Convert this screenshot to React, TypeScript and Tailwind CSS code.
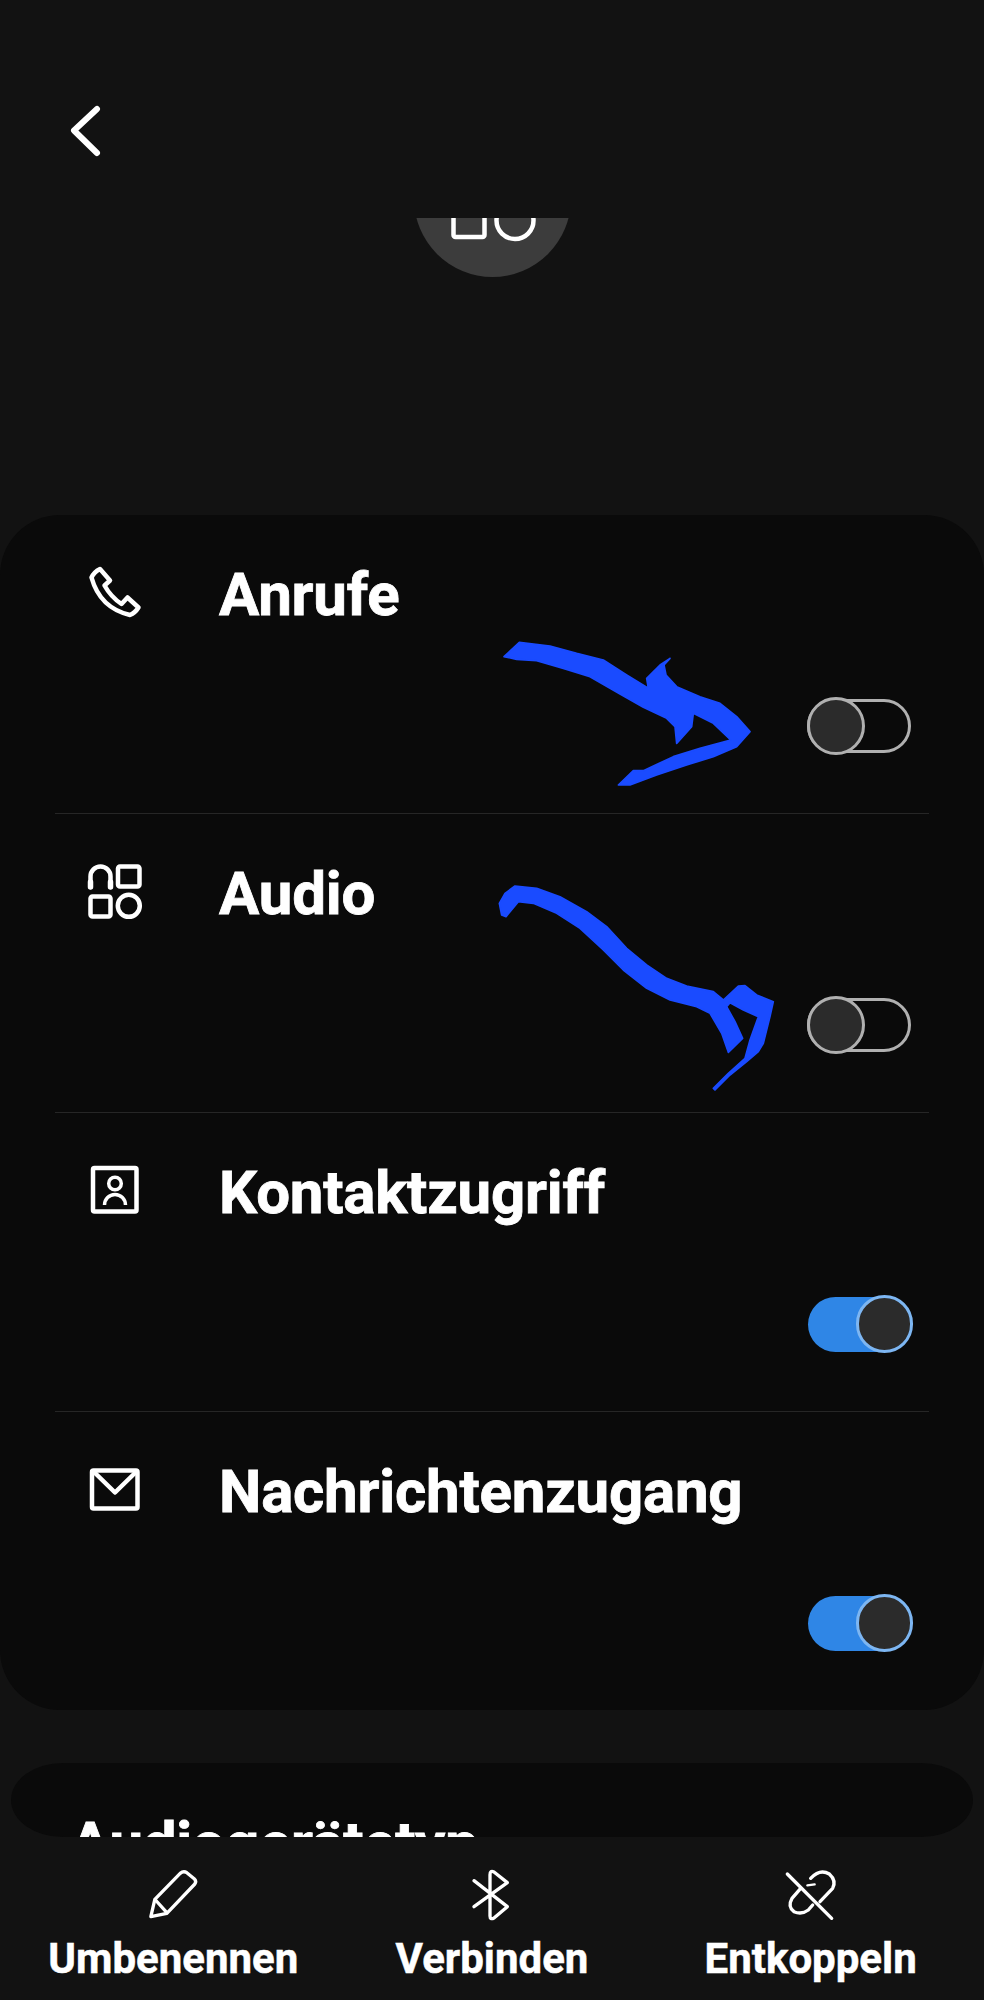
import type { ReactNode } from "react";

const font = { fontFamily: "Roboto, sans-serif" };

function Glyph({ children }: { children: ReactNode }) {
  return (
    <svg
      width="60"
      height="60"
      viewBox="0 0 60 60"
      fill="none"
      stroke="white"
      strokeWidth="4.5"
      strokeLinecap="round"
      strokeLinejoin="round"
      className="mt-[2px] shrink-0"
    >
      {children}
    </svg>
  );
}

function PhoneIcon() {
  return (
    <Glyph>
      <path d="M15 7 L25 18.5 L19.5 23.5 Q26 35 36.5 42 L42.5 35.5 L53.5 45.5 Q50 51 45 53 Q15 46 6.5 15.5 Q9 10 15 7 Z" />
    </Glyph>
  );
}

function AudioIcon() {
  return (
    <Glyph>
      <path d="M5.5 26 V15.5 a10 10 0 0 1 20 0 V26" />
      <path d="M5.5 21 V26 M25.5 21 V26" strokeWidth="5.5" />
      <rect x="33" y="5.5" width="21.5" height="20" rx="2" />
      <rect x="5.5" y="35.5" width="20" height="20" rx="2" />
      <circle cx="43.8" cy="44.8" r="11" />
    </Glyph>
  );
}

function ContactIcon() {
  return (
    <Glyph>
      <rect x="8" y="8" width="43.5" height="43.5" rx="1.5" />
      <circle cx="30" cy="23.5" r="6.3" strokeWidth="3.5" />
      <path d="M19.5 45 a10.5 10.5 0 0 1 21 0" strokeWidth="3.5" strokeLinecap="butt" />
    </Glyph>
  );
}

function MailIcon() {
  return (
    <Glyph>
      <rect x="7" y="11.5" width="45.5" height="38" rx="1.5" />
      <path d="M8.5 12.5 L30 33.5 L51.5 12.5" />
    </Glyph>
  );
}

function Toggle({ on }: { on: boolean }) {
  if (on) {
    return (
      <div className="flex h-[55px] w-[103px] items-center justify-end rounded-full bg-[#2f86e6]">
        <div className="-mr-[2px] h-[58px] w-[57px] shrink-0 rounded-full border-[3px] border-[#7db6f2] bg-[#2b2b2b]" />
      </div>
    );
  }
  return (
    <div className="flex h-[54px] w-[104px] items-center rounded-full border-[3px] border-[#b0b0b0]">
      <div className="-ml-[3px] h-[58px] w-[58px] shrink-0 rounded-full border-[3px] border-[#b0b0b0] bg-[#2b2b2b]" />
    </div>
  );
}

function SettingRow({ icon, title, on }: { icon: ReactNode; title: string; on: boolean }) {
  return (
    <div className="flex h-[298px] flex-col pt-[45px]">
      <div className="flex h-[70px] items-start pl-[85px]">
        {icon}
        <span className="ml-[74px] text-[60px] leading-[70px] font-bold tracking-[-0.2px] text-white [-webkit-text-stroke:0.8px_white]">
          {title}
        </span>
      </div>
      <div className="mt-[67px] flex h-[58px] items-center justify-end pr-[73px]">
        <Toggle on={on} />
      </div>
    </div>
  );
}

function Divider() {
  return <div className="mx-[55px] h-px bg-[#262626]" />;
}

function BottomAction({ label, viewBox, children }: { label: string; viewBox: string; children: ReactNode }) {
  return (
    <div className="flex flex-col items-center">
      <svg
        width="90"
        height="70"
        viewBox={viewBox}
        fill="none"
        stroke="white"
        strokeWidth="10"
        strokeLinecap="round"
        strokeLinejoin="round"
      >
        {children}
      </svg>
      <span className="mt-[4px] text-[42px] leading-[50px] font-bold whitespace-nowrap text-white [-webkit-text-stroke:0.5px_white]">
        {label}
      </span>
    </div>
  );
}

// hand drawn arrows on top of the screenshot
function Scribbles() {
  return (
    <svg
      width="460"
      height="480"
      viewBox="0 0 1380 1440"
      fill="#1a4bff"
      stroke="#1a4bff"
      strokeWidth="5"
      strokeLinejoin="round"
      className="absolute top-[620px] left-[480px]"
    >
      <path d="M72 110 L118 67 L210 78 L290 100 L370 120 L440 165 L505 205 L500 175 L540 135 L570 115 L552 135 L558 165 L590 200 L660 230 L720 250 L770 290 L810 335 L770 380 L700 410 L620 435 L530 465 L450 495 L415 495 L460 452 L490 452 L580 410 L660 385 L752 360 L700 310 L640 280 L635 320 L590 370 L585 320 L560 295 L490 262 L420 222 L330 170 L250 145 L170 122 L110 118 Z" />
      <path d="M58 850 L75 820 L105 798 L170 805 L240 830 L320 875 L380 920 L440 985 L500 1035 L560 1075 L620 1098 L700 1115 L730 1140 L775 1098 L795 1097 L830 1125 L880 1145 L870 1190 L850 1270 L835 1295 L800 1325 L750 1365 L705 1410 L700 1405 L745 1360 L795 1315 L810 1260 L835 1190 L790 1170 L750 1148 L740 1160 L765 1205 L788 1255 L745 1297 L725 1240 L690 1180 L650 1160 L570 1140 L500 1105 L430 1050 L370 990 L300 925 L230 880 L160 850 L115 845 L78 890 L65 885 Z" />
    </svg>
  );
}

export default function App() {
  return (
    <div className="relative flex h-[2000px] w-[984px] flex-col overflow-hidden bg-[#121212]" style={font}>
      <div className="h-[1837px] shrink-0 overflow-hidden">
        {/* Header with back button and clipped device avatar */}
        <div className="pt-[105px] pl-[70px]">
          <svg width="32" height="52" viewBox="0 0 32 52" fill="none" stroke="white" strokeWidth="6" strokeLinecap="round" strokeLinejoin="round">
            <path d="M27 4 L4 25.5 L27 48" />
          </svg>
        </div>
        <div className="mx-auto mt-[61px] h-[59px] w-[157px] overflow-hidden">
          <div className="-mt-[98px] h-[157px] w-[157px] rounded-full bg-[#3c3c3c]">
            <svg width="157" height="157" viewBox="0 0 157 157" fill="none" stroke="white" strokeWidth="4.5">
              <rect x="39.5" y="86" width="31" height="31" rx="2" />
              <circle cx="101" cy="100.5" r="18.5" />
            </svg>
          </div>
        </div>

        {/* Profiles card */}
        <div className="mt-[238px] rounded-[60px] bg-[#0a0a0a]">
          <SettingRow icon={<PhoneIcon />} title="Anrufe" on={false} />
          <Divider />
          <SettingRow icon={<AudioIcon />} title="Audio" on={false} />
          <Divider />
          <SettingRow icon={<ContactIcon />} title="Kontaktzugriff" on />
          <Divider />
          <SettingRow icon={<MailIcon />} title="Nachrichtenzugang" on />
        </div>

        {/* Next card, cut off by the bottom bar */}
        <div className="mx-[11px] mt-[53px] h-[74px] overflow-hidden rounded-[52px/37px] bg-[#0a0a0a] pt-[46px] pl-[59px]">
          <span className="block text-[60px] leading-[70px] font-bold tracking-[-0.4px] text-white [-webkit-text-stroke:0.8px_white]">
            Audiogerätetyp
          </span>
        </div>
      </div>

      {/* Bottom actions */}
      <div className="grid grid-cols-3 px-[14px] pt-[23px]">
        <BottomAction label="Umbenennen" viewBox="-4.5 0 270 210">
          <path d="M152 40 L76 118 L64 170 L112 160 L196 72 Q202 64 194 56 L172 38 Q162 32 152 40 Z" />
          <path d="M78 120 L112 158" />
        </BottomAction>
        <BottomAction label="Verbinden" viewBox="-9 0 270 210">
          <path d="M72 62 L172 140 L132 174 Q120 180 120 168 V44 Q120 30 132 36 L172 68 L72 140" />
        </BottomAction>
        <BottomAction label="Entkoppeln" viewBox="-12 0 270 210">
          <path d="M52 42 L185 175" />
          <path d="M122 55 Q150 25 178 42 Q200 62 188 85 L150 125" />
          <path d="M92 85 L66 115 Q52 140 72 155 Q95 165 115 150 L128 135" />
          <path d="M112 76 L134 73" strokeWidth="7" />
        </BottomAction>
      </div>

      <Scribbles />
    </div>
  );
}
